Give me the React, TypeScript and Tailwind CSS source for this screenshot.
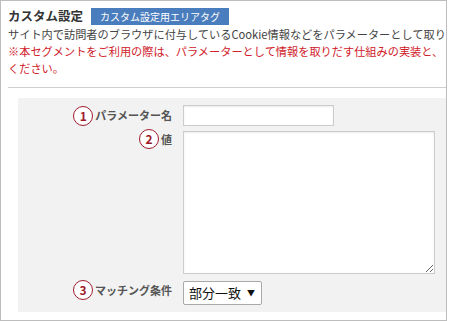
import React from "react";

const jp = { fontFamily: '"Noto Sans CJK JP", "Noto Sans", sans-serif' };

function Num({ n }: { n: number }) {
  return (
    <span className="flex h-[20px] w-[20px] shrink-0 items-center justify-center rounded-full border-[1.5px] border-[#9e1b2c] bg-white text-[12px] font-bold leading-none text-[#9e1b2c]">
      {n}
    </span>
  );
}

function Label({ n, text, className = "" }: { n: number; text: string; className?: string }) {
  return (
    <div className={`flex items-center justify-end gap-[2px] text-[11px] font-bold text-[#555] ${className}`}>
      <Num n={n} />
      <span>{text}</span>
    </div>
  );
}

export default function App() {
  return (
    <div className="h-[321px] w-[452px] bg-white" style={jp}>
      <div className="h-[321px] w-[447px] overflow-hidden border border-[#bdbdbd] pl-[7px] pt-[6px]">
        <div className="flex items-center gap-[8px]">
          <h2 className="text-[12.5px] font-bold leading-[18px] text-[#333]">カスタム設定</h2>
          <span className="mt-[1px] bg-[#4a7dbd] px-[9px] text-[10px] leading-[17px] text-white">
            カスタム設定用エリアタグ
          </span>
        </div>
        <p className="mt-[1px] whitespace-nowrap text-[11.2px] leading-[17px] text-[#444]">
          サイト内で訪問者のブラウザに付与しているCookie情報などをパラメーターとして取り
        </p>
        <p className="text-[11.2px] leading-[17px] text-[#d0202a]">
          <span className="whitespace-nowrap">※本セグメントをご利用の際は、パラメーターとして情報を取りだす仕組みの実装と、</span>
          <br />
          ください。
        </p>
        <div className="mt-[10px] border-t border-[#cfcfcf]" />
        <div className="ml-[10px] mt-[10px] grid grid-cols-[154px_1fr] gap-x-[11px] bg-[#f2f2f2] pb-[7px] pt-[7px]">
          <Label n={1} text="パラメーター名" className="h-[21px]" />
          <input className="h-[21px] w-[151px] border border-[#cccccc] bg-white shadow-[inset_0_1px_2px_rgba(0,0,0,0.08)] outline-none" />

          <Label n={2} text="値" className="mt-[3px] h-[20px] self-start" />
          <textarea className="mt-[5px] h-[143px] w-[252px] border border-[#cccccc] bg-white shadow-[inset_0_1px_2px_rgba(0,0,0,0.08)] outline-none" />

          <Label n={3} text="マッチング条件" className="mt-[6px] h-[20px] self-start" />
          <div className="mt-[7px] flex h-[24px] w-[79px] items-center gap-[6px] rounded-[2px] border border-[#a9a9a9] bg-white pl-[5px] text-[13px] text-[#111]">
            <span>部分一致</span>
            <span className="text-[8px]">▼</span>
          </div>
        </div>
      </div>
    </div>
  );
}
